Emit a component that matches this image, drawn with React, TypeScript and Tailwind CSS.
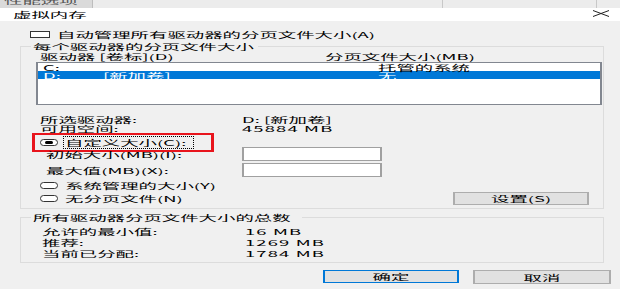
import React from "react";

// the screenshot is stretched sideways, so every label is drawn narrow and scaled on x
function T({ children, className = "" }: { children: React.ReactNode; className?: string }) {
  return (
    <span
      className={`inline-block origin-left scale-x-[2.3] whitespace-nowrap text-[8px] leading-[9px] ${className}`}
    >
      {children}
    </span>
  );
}

function Radio({ checked = false }: { checked?: boolean }) {
  return (
    <span className="flex h-[7px] w-[18px] shrink-0 items-center justify-center rounded-full border border-[#333] bg-white">
      {checked && <span className="h-[3px] w-[8px] rounded-full bg-black" />}
    </span>
  );
}

function Button({ label, primary = false, className = "" }: { label: string; primary?: boolean; className?: string }) {
  return (
    <div
      className={`flex items-center justify-center bg-[#e1e1e1] ${
        primary ? "border-x-2 border-y border-[#0078d7]" : "border-x-2 border-y border-[#adadad]"
      } ${className}`}
    >
      <span className="inline-block origin-center scale-x-[2.3] whitespace-nowrap text-[8px] leading-[9px]">
        {label}
      </span>
    </div>
  );
}

function Field() {
  return <div className="h-[14px] w-[140px] border-x-2 border-y border-[#a0a0a0] bg-white" />;
}

export default function App() {
  return (
    <div className="h-[289px] w-[620px] overflow-hidden bg-[#f0f0f0] font-['Noto_Sans_CJK_SC',sans-serif] text-[8px] leading-[9px] text-black">
      {/* window behind the dialog */}
      <div className="flex h-[8px] bg-[#ececec]">
        <div className="w-[93px] overflow-hidden border-r border-[#bdbdbd] bg-[#dadada] pl-[4px]">
          <div className="-mt-[4px]">
            <T className="text-[#555]">性能选项</T>
          </div>
        </div>
        <div className="w-[350px] border-r border-[#c8c8c8]" />
        <div className="w-[154px] border-r border-[#c8c8c8]" />
      </div>

      {/* title bar */}
      <div className="flex h-[13px] items-center justify-between bg-white pl-[13px] pr-[10px]">
        <T>虚拟内存</T>
        <svg width="18" height="7" viewBox="0 0 18 7" className="mt-[-2px]">
          <path d="M1 0.5 L17 6.5 M17 0.5 L1 6.5" stroke="#222" strokeWidth="1" fill="none" />
        </svg>
      </div>

      <div className="pt-[9px]">
        <div className="flex h-[9px] items-center pl-[30px]">
          <span className="h-[7px] w-[20px] shrink-0 border border-[#333] bg-white" />
          <span className="ml-[7px]">
            <T>自动管理所有驱动器的分页文件大小(A)</T>
          </span>
        </div>

        <fieldset className="ml-[20px] mt-[3px] w-[584px] border border-[#dcdcdc] pb-[3px]">
          <legend className="ml-[10px] h-[9px] w-[227px] px-[2px]">
            <T>每个驱动器的分页文件大小</T>
          </legend>

          <div className="mt-[1px] flex h-[9px] pl-[19px]">
            <div className="w-[285px]">
              <T>驱动器 [卷标](D)</T>
            </div>
            <T>分页文件大小(MB)</T>
          </div>

          <div className="ml-[15px] mt-[1px] h-[43px] w-[566px] border-x-2 border-y border-[#828790] bg-white">
            <div className="flex h-[8px] items-center pl-[5px]">
              <span className="w-[60px]">
                <T>C:</T>
              </span>
              <span className="w-[275px]" />
              <T>托管的系统</T>
            </div>
            <div className="flex h-[8px] items-center bg-[#0078d7] pl-[5px] text-white">
              <span className="w-[60px]">
                <T>D:</T>
              </span>
              <span className="w-[275px]">
                <T>[新加卷]</T>
              </span>
              <T>无</T>
            </div>
          </div>

          <div className="mt-[10px] flex h-[9px] pl-[19px]">
            <span className="w-[202px]">
              <T>所选驱动器:</T>
            </span>
            <span className="w-[22px]">
              <T>D:</T>
            </span>
            <T>[新加卷]</T>
          </div>
          <div className="flex h-[9px] pl-[19px]">
            <span className="w-[202px]">
              <T>可用空间:</T>
            </span>
            <T className="tracking-[0.5px]">45884 MB</T>
          </div>

          <div className="relative mt-[5px] flex h-[9px] items-center pl-[19px]">
            <div className="absolute -top-[5px] left-[11px] h-[19px] w-[182px] border-x-[3px] border-y-2 border-[#e8141c]" />
            <Radio checked />
            <div className="ml-[5px] flex h-[13px] w-[131px] shrink-0 items-center border border-dotted border-black pl-[1px]">
              <T>自定义大小(C):</T>
            </div>
          </div>

          <div className="flex h-[14px] items-center pl-[25px]">
            <span className="w-[196px]">
              <T>初始大小(MB)(I):</T>
            </span>
            <Field />
          </div>
          <div className="mt-[2px] flex h-[14px] items-center pl-[25px]">
            <span className="w-[196px]">
              <T>最大值(MB)(X):</T>
            </span>
            <Field />
          </div>

          <div className="mt-[4px] flex h-[9px] items-center pl-[19px]">
            <Radio />
            <span className="ml-[7px]">
              <T>系统管理的大小(Y)</T>
            </span>
          </div>
          <div className="mt-[1px] flex h-[14px] items-center justify-between pl-[19px] pr-[14px]">
            <div className="flex items-center">
              <Radio />
              <span className="ml-[7px]">
                <T>无分页文件(N)</T>
              </span>
            </div>
            <Button label="设置(S)" className="h-[13px] w-[136px]" />
          </div>
        </fieldset>

        <fieldset className="ml-[20px] mt-[4px] w-[584px] border border-[#dcdcdc] pb-[3px]">
          <legend className="ml-[10px] h-[9px] w-[271px] px-[2px]">
            <T>所有驱动器分页文件大小的总数</T>
          </legend>
          <div className="mt-[4px]">
            {[
              ["允许的最小值:", "16 MB"],
              ["推荐:", "1269 MB"],
              ["当前已分配:", "1784 MB"],
            ].map(([k, v]) => (
              <div key={k} className="flex h-[11px] items-center pl-[21px]">
                <span className="w-[203px]">
                  <T>{k}</T>
                </span>
                <T className="tracking-[0.5px]">{v}</T>
              </div>
            ))}
          </div>
        </fieldset>

        <div className="mt-[7px] flex justify-end gap-[14px] pr-[9px]">
          <Button label="确定" primary className="h-[13px] w-[136px]" />
          <Button label="取消" className="h-[14px] w-[138px]" />
        </div>
      </div>
    </div>
  );
}
